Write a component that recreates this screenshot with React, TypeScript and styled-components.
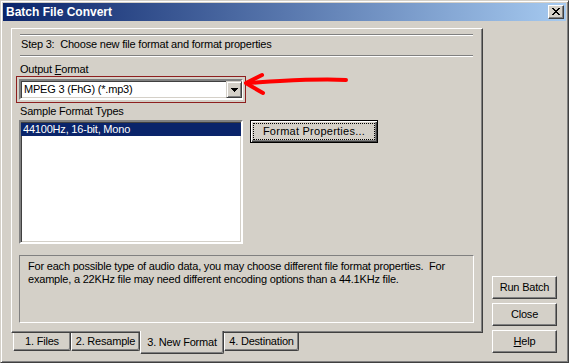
import React from "react";
import styled, { createGlobalStyle, css } from "styled-components";

const FACE = "#d4d0c8";

const Global = createGlobalStyle`
  html, body { margin: 0; padding: 0; background: ${FACE}; }
  * { box-sizing: border-box; }
  body { font-family: "Liberation Sans", Arial, sans-serif; font-size: 11px; }
`;

const Window = styled.div`
  position: relative;
  width: 569px;
  height: 363px;
  background: ${FACE};
  border: 1px solid;
  border-color: ${FACE} #404040 #404040 ${FACE};
  box-shadow: inset 1px 1px #fff, inset -1px -1px #808080;
  padding: 2px;
  display: flex;
  flex-direction: column;
  font-family: "Liberation Sans", Arial, sans-serif;
  font-size: 11px;
  letter-spacing: -0.2px;
  color: #000;
`;

const TitleBar = styled.div`
  height: 18px;
  flex: none;
  display: flex;
  align-items: center;
  justify-content: space-between;
  background: linear-gradient(to right, #0a246a, #a6caf0);
  padding: 0 2px 0 3px;
`;

const TitleText = styled.span`
  color: #fff;
  font-weight: bold;
  font-size: 12px;
  line-height: 18px;
  letter-spacing: 0;
`;

const CloseBox = styled.div`
  width: 16px;
  height: 14px;
  background: ${FACE};
  border: 1px solid;
  border-color: #fff #404040 #404040 #fff;
  box-shadow: inset -1px -1px #808080;
  display: flex;
  align-items: center;
  justify-content: center;
  padding-bottom: 1px;
`;

const Body = styled.div`
  flex: 1;
  display: flex;
  padding: 7px 9px 6px 8px;
  gap: 9px;
`;

const TabControl = styled.div`
  width: 472px;
  display: flex;
  flex-direction: column;
`;

const Page = styled.div`
  height: 305px;
  flex: none;
  border: 1px solid;
  border-color: #fff #404040 #404040 #fff;
  box-shadow: inset -1px -1px #808080;
  padding: 5px 9px 9px 7px;
  display: flex;
  flex-direction: column;
`;

const StepHeader = styled.div`
  height: 22px;
  margin-left: 1px;
  border-top: 1px solid #808080;
  border-bottom: 1px solid #808080;
  box-shadow: inset 0 1px #fff, 0 1px #fff;
  padding: 3px 0 0 1px;
  line-height: 13px;
  white-space: pre;
`;

const Label = styled.div<{ $top: number }>`
  margin-top: ${(p) => p.$top}px;
  padding-left: 1px;
  line-height: 13px;
  height: 13px;
  white-space: pre;
`;

const Highlight = styled.div`
  width: 230px;
  margin-left: -3px;
  border: 1px solid #8e1f1f;
  padding: 2px;
`;

const sunken = css`
  border: 2px solid;
  border-color: #808080 #fff #fff #808080;
  box-shadow: inset 1px 1px #404040, inset -1px -1px ${FACE};
`;

const Combo = styled.div`
  ${sunken};
  height: 21px;
  background: #fff;
  display: flex;
  align-items: center;
  justify-content: space-between;
  padding: 0 0 0 3px;
  line-height: 13px;
`;

const DropButton = styled.div`
  width: 16px;
  height: 17px;
  margin-right: -1px;
  background: ${FACE};
  border: 1px solid;
  border-color: ${FACE} #404040 #404040 ${FACE};
  box-shadow: inset 1px 1px #fff, inset -1px -1px #808080;
  display: flex;
  align-items: center;
  justify-content: center;
`;

const Row = styled.div`
  margin-top: 2px;
  display: flex;
  align-items: flex-start;
  gap: 7px;
`;

const ListBox = styled.div`
  ${sunken};
  width: 224px;
  height: 124px;
  background: #fff;
  padding: 1px 0 0 0;
`;

const ListItem = styled.div<{ $selected?: boolean }>`
  height: 13px;
  line-height: 13px;
  padding-left: 2px;
  background: ${(p) => (p.$selected ? "#0a246a" : "transparent")};
  color: ${(p) => (p.$selected ? "#fff" : "#000")};
`;

const raised = css`
  background: ${FACE};
  border: 1px solid;
  border-color: #fff #404040 #404040 #fff;
  box-shadow: inset -1px -1px #808080;
`;

const PushButton = styled.div<{ $default?: boolean; $w: number }>`
  position: relative;
  width: ${(p) => p.$w}px;
  height: 23px;
  flex: none;
  display: flex;
  align-items: center;
  justify-content: center;
  line-height: 13px;
  ${(p) =>
    p.$default
      ? css`
          letter-spacing: 0.25px;
          background: ${FACE};
          border: 1px solid #000;
          box-shadow: inset 1px 1px #fff, inset -1px -1px #404040,
            inset -2px -2px #808080;
          &::after {
            content: "";
            position: absolute;
            inset: 2px;
            border: 1px dotted #000;
          }
        `
      : raised};
`;

const DescBox = styled.div`
  margin-top: 11px;
  margin-right: -1px;
  height: 68px;
  border: 1px solid;
  border-color: #808080 #fff #fff #808080;
  padding: 4px 8px;
  line-height: 13px;
  white-space: pre;
`;

const TabStrip = styled.div`
  display: flex;
  align-items: flex-start;
  padding-left: 2px;
`;

const Tab = styled.div<{ $active?: boolean; $w: number }>`
  position: relative;
  width: ${(p) => p.$w}px;
  text-align: center;
  line-height: 13px;
  background: ${FACE};
  border-left: 1px solid #fff;
  border-right: 1px solid #404040;
  border-bottom: 1px solid #404040;
  box-shadow: inset -1px -1px #808080;
  border-bottom-right-radius: 2px;
  ${(p) =>
    p.$active
      ? css`
          height: 23px;
          margin-top: -2px;
          padding-top: 5px;
          z-index: 1;
        `
      : css`
          height: 18px;
          padding-top: 2px;
        `};
`;

const ButtonColumn = styled.div`
  width: 65px;
  display: flex;
  flex-direction: column;
  justify-content: flex-end;
  gap: 4px;
  padding-bottom: 1px;
`;

const Annotation = styled.svg`
  position: absolute;
  left: 239px;
  top: 67px;
  overflow: visible;
  pointer-events: none;
`;

const CloseGlyph = () => (
  <svg width="8" height="7" viewBox="0 0 8 7" shapeRendering="crispEdges">
    <path
      d="M0 0h2v1h-2zM6 0h2v1h-2zM1 1h2v1h-2zM5 1h2v1h-2zM2 2h4v1h-4zM3 3h2v1h-2zM2 4h4v1h-4zM1 5h2v1h-2zM5 5h2v1h-2zM0 6h2v1h-2zM6 6h2v1h-2z"
      fill="#000"
    />
  </svg>
);

const DownArrow = () => (
  <svg width="7" height="4" viewBox="0 0 7 4" shapeRendering="crispEdges">
    <path d="M0 0h7v1h-7zM1 1h5v1h-5zM2 2h3v1h-3zM3 3h1v1h-1z" fill="#000" />
  </svg>
);

export default function App() {
  return (
    <>
      <Global />
      <Window>
        <TitleBar>
          <TitleText>Batch File Convert</TitleText>
          <CloseBox>
            <CloseGlyph />
          </CloseBox>
        </TitleBar>
        <Body>
          <TabControl>
            <Page>
              <StepHeader>Step 3:  Choose new file format and format properties</StepHeader>
              <Label $top={7}>
                Output <u>F</u>ormat
              </Label>
              <Highlight>
                <Combo>
                  <span>MPEG 3 (FhG) (*.mp3)</span>
                  <DropButton>
                    <DownArrow />
                  </DropButton>
                </Combo>
              </Highlight>
              <Label $top={2}>Sample Format Types</Label>
              <Row>
                <ListBox>
                  <ListItem $selected>44100Hz, 16-bit, Mono</ListItem>
                </ListBox>
                <PushButton $default $w={128}>
                  Format Properties...
                </PushButton>
              </Row>
              <DescBox>
                {"For each possible type of audio data, you may choose different file format properties.  For\nexample, a 22KHz file may need different encoding options than a 44.1KHz file."}
              </DescBox>
            </Page>
            <TabStrip>
              <Tab $w={58}>1. Files</Tab>
              <Tab $w={69}>2. Resample</Tab>
              <Tab $w={84} $active>
                3. New Format
              </Tab>
              <Tab $w={75}>4. Destination</Tab>
            </TabStrip>
          </TabControl>
          <ButtonColumn>
            <PushButton $w={65}>Run Batch</PushButton>
            <PushButton $w={65}>Close</PushButton>
            <PushButton $w={65}>
              <span>
                <u>H</u>elp
              </span>
            </PushButton>
          </ButtonColumn>
        </Body>
        <Annotation width="112" height="32" viewBox="0 0 112 32">
          <path
            d="M106 12 C 85 11, 60 12, 40 13 S 15 15, 7 15"
            fill="none"
            stroke="#ff0000"
            strokeWidth="4"
            strokeLinecap="round"
          />
          <path
            d="M22 7 L6 15 Q 14 20, 23 25"
            fill="none"
            stroke="#ff0000"
            strokeWidth="4"
            strokeLinecap="round"
            strokeLinejoin="round"
          />
        </Annotation>
      </Window>
    </>
  );
}
